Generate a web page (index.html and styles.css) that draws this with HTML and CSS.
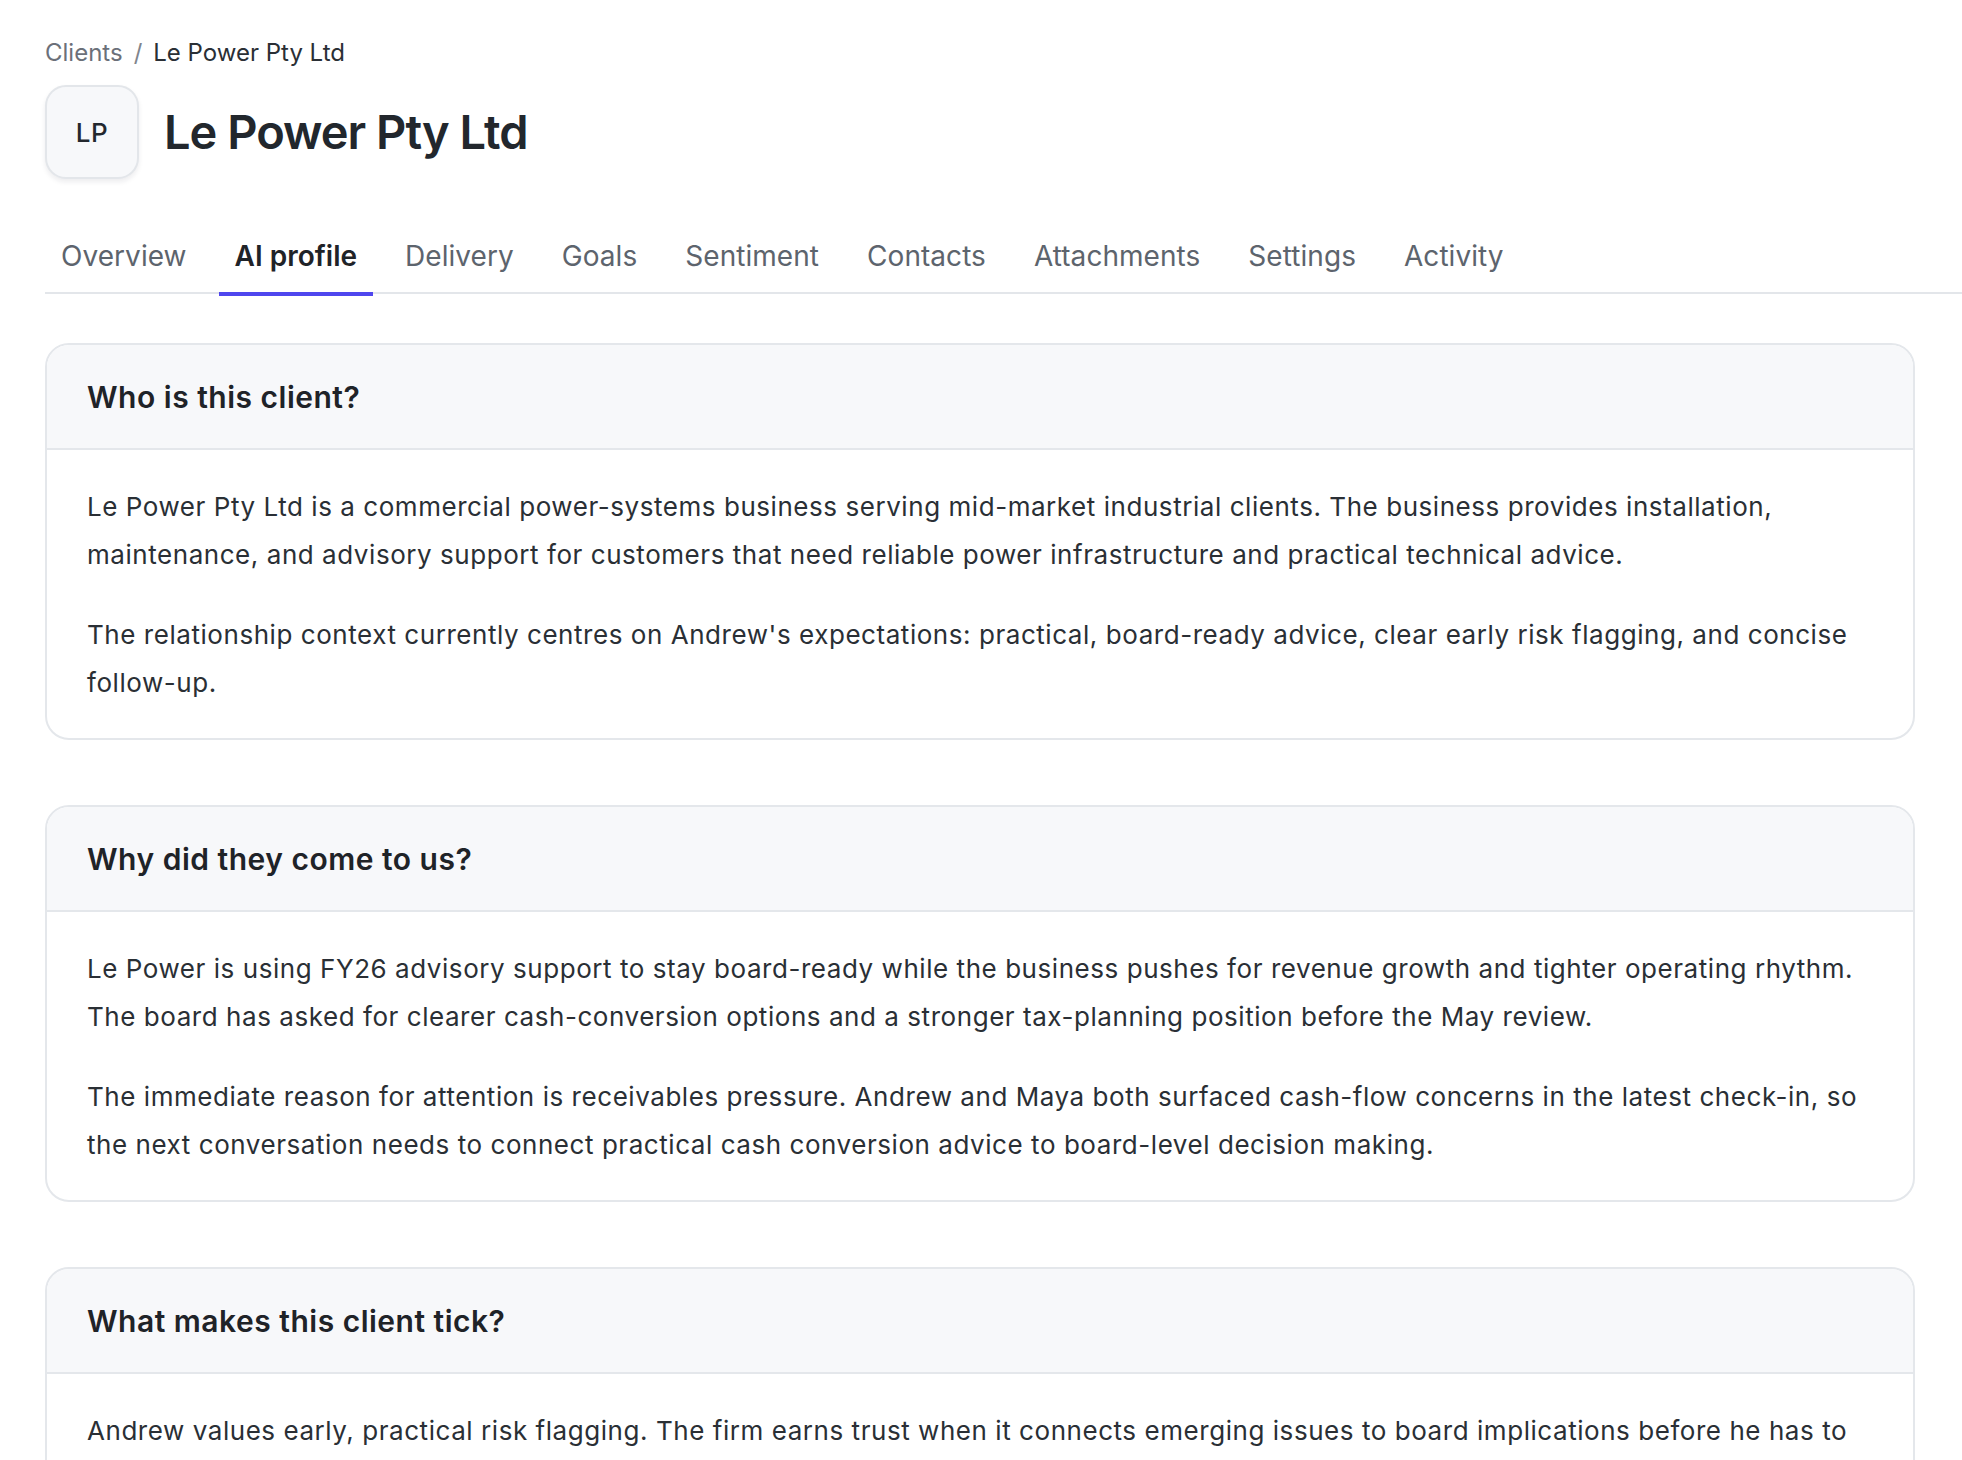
FILE: index.html
```html
<!DOCTYPE html>
<html lang="en">
<head>
<meta charset="utf-8">
<title>Le Power Pty Ltd – AI profile</title>
<link rel="stylesheet" href="styles.css">
</head>
<body>
<div class="page">
  <nav class="breadcrumb">
    <span class="crumb-link">Clients</span>
    <span class="crumb-sep">/</span>
    <span class="crumb-current">Le Power Pty Ltd</span>
  </nav>

  <header class="client-header">
    <div class="avatar">LP</div>
    <h1 class="client-name">Le Power Pty Ltd</h1>
  </header>

  <div class="tabs">
    <span class="tab">Overview</span>
    <span class="tab active">AI profile</span>
    <span class="tab">Delivery</span>
    <span class="tab">Goals</span>
    <span class="tab">Sentiment</span>
    <span class="tab">Contacts</span>
    <span class="tab">Attachments</span>
    <span class="tab">Settings</span>
    <span class="tab">Activity</span>
  </div>

  <section class="card">
    <div class="card-head"><h2 class="card-title">Who is this client?</h2></div>
    <div class="card-body">
      <p>Le Power Pty Ltd is a commercial power-systems business serving mid-market industrial clients. The business provides installation, maintenance, and advisory support for customers that need reliable power infrastructure and practical technical advice.</p>
      <p>The relationship context currently centres on Andrew's expectations: practical, board-ready advice, clear early risk flagging, and concise follow-up.</p>
    </div>
  </section>

  <section class="card">
    <div class="card-head"><h2 class="card-title">Why did they come to us?</h2></div>
    <div class="card-body">
      <p>Le Power is using FY26 advisory support to stay board-ready while the business pushes for revenue growth and tighter operating rhythm. The board has asked for clearer cash-conversion options and a stronger tax-planning position before the May review.</p>
      <p>The immediate reason for attention is receivables pressure. Andrew and Maya both surfaced cash-flow concerns in the latest check-in, so the next conversation needs to connect practical cash conversion advice to board-level decision making.</p>
    </div>
  </section>

  <section class="card">
    <div class="card-head"><h2 class="card-title">What makes this client tick?</h2></div>
    <div class="card-body">
      <p>Andrew values early, practical risk flagging. The firm earns trust when it connects emerging issues to board implications before he has to ask, and when follow-up is concise and clearly actioned.</p>
    </div>
  </section>
</div>
</body>
</html>
```

FILE: styles.css
```css
* { box-sizing: border-box; }

html, body {
  margin: 0;
  padding: 0;
  background: #ffffff;
}

body {
  font-family: Inter, "Noto Sans", "Liberation Sans", sans-serif;
  color: #1f2328;
}

.page {
  padding: 35px 47px 0 45px;
}

.breadcrumb {
  display: flex;
  align-items: center;
  gap: 11px;
  font-size: 24px;
  line-height: 36px;
}

.crumb-link { color: #6b7079; }
.crumb-sep { color: #80858d; }
.crumb-current { color: #2a2f35; }

.client-header {
  display: flex;
  align-items: center;
  gap: 25px;
  margin-top: 14px;
}

.avatar {
  width: 94px;
  height: 94px;
  flex: none;
  display: flex;
  align-items: center;
  justify-content: center;
  border: 2px solid #e3e6ea;
  border-radius: 21px;
  background: #f7f8fa;
  box-shadow: 0 3px 5px rgba(20, 30, 45, 0.08);
  font-size: 26px;
  font-weight: 500;
  letter-spacing: 0.5px;
  color: #23282e;
}

.client-name {
  margin: 0;
  font-size: 47px;
  line-height: 60px;
  font-weight: 600;
  letter-spacing: -1px;
  color: #22272d;
}

.tabs {
  display: flex;
  gap: 16px;
  margin-top: 47px;
  margin-right: -47px;
  border-bottom: 2px solid #e3e6ea;
}

.tab {
  padding: 10px 16px 16px;
  margin-bottom: -4px;
  border-bottom: 4px solid transparent;
  font-size: 28px;
  line-height: 40px;
  letter-spacing: 0.05px;
  color: #5d646d;
}

.tab.active {
  color: #1f2328;
  font-weight: 600;
  letter-spacing: 0;
  border-bottom-color: #4f46ee;
}

.card {
  margin-top: 49px;
  border: 2px solid #e4e7eb;
  border-radius: 24px;
  overflow: hidden;
}

.card + .card {
  margin-top: 65px;
}

.card-head {
  background: #f7f8fa;
  border-bottom: 2px solid #e4e7eb;
  padding: 31px 40px 30px;
}

.card-title {
  margin: 0;
  font-size: 30px;
  line-height: 42px;
  font-weight: 600;
  letter-spacing: 0.5px;
  color: #1f2328;
}

.card-body {
  padding: 33px 40px 31px;
}

.card-body p {
  margin: 0;
  font-size: 26px;
  line-height: 48px;
  letter-spacing: 0.55px;
  color: #2a2f35;
}

.card-body p + p {
  margin-top: 32px;
}
```
